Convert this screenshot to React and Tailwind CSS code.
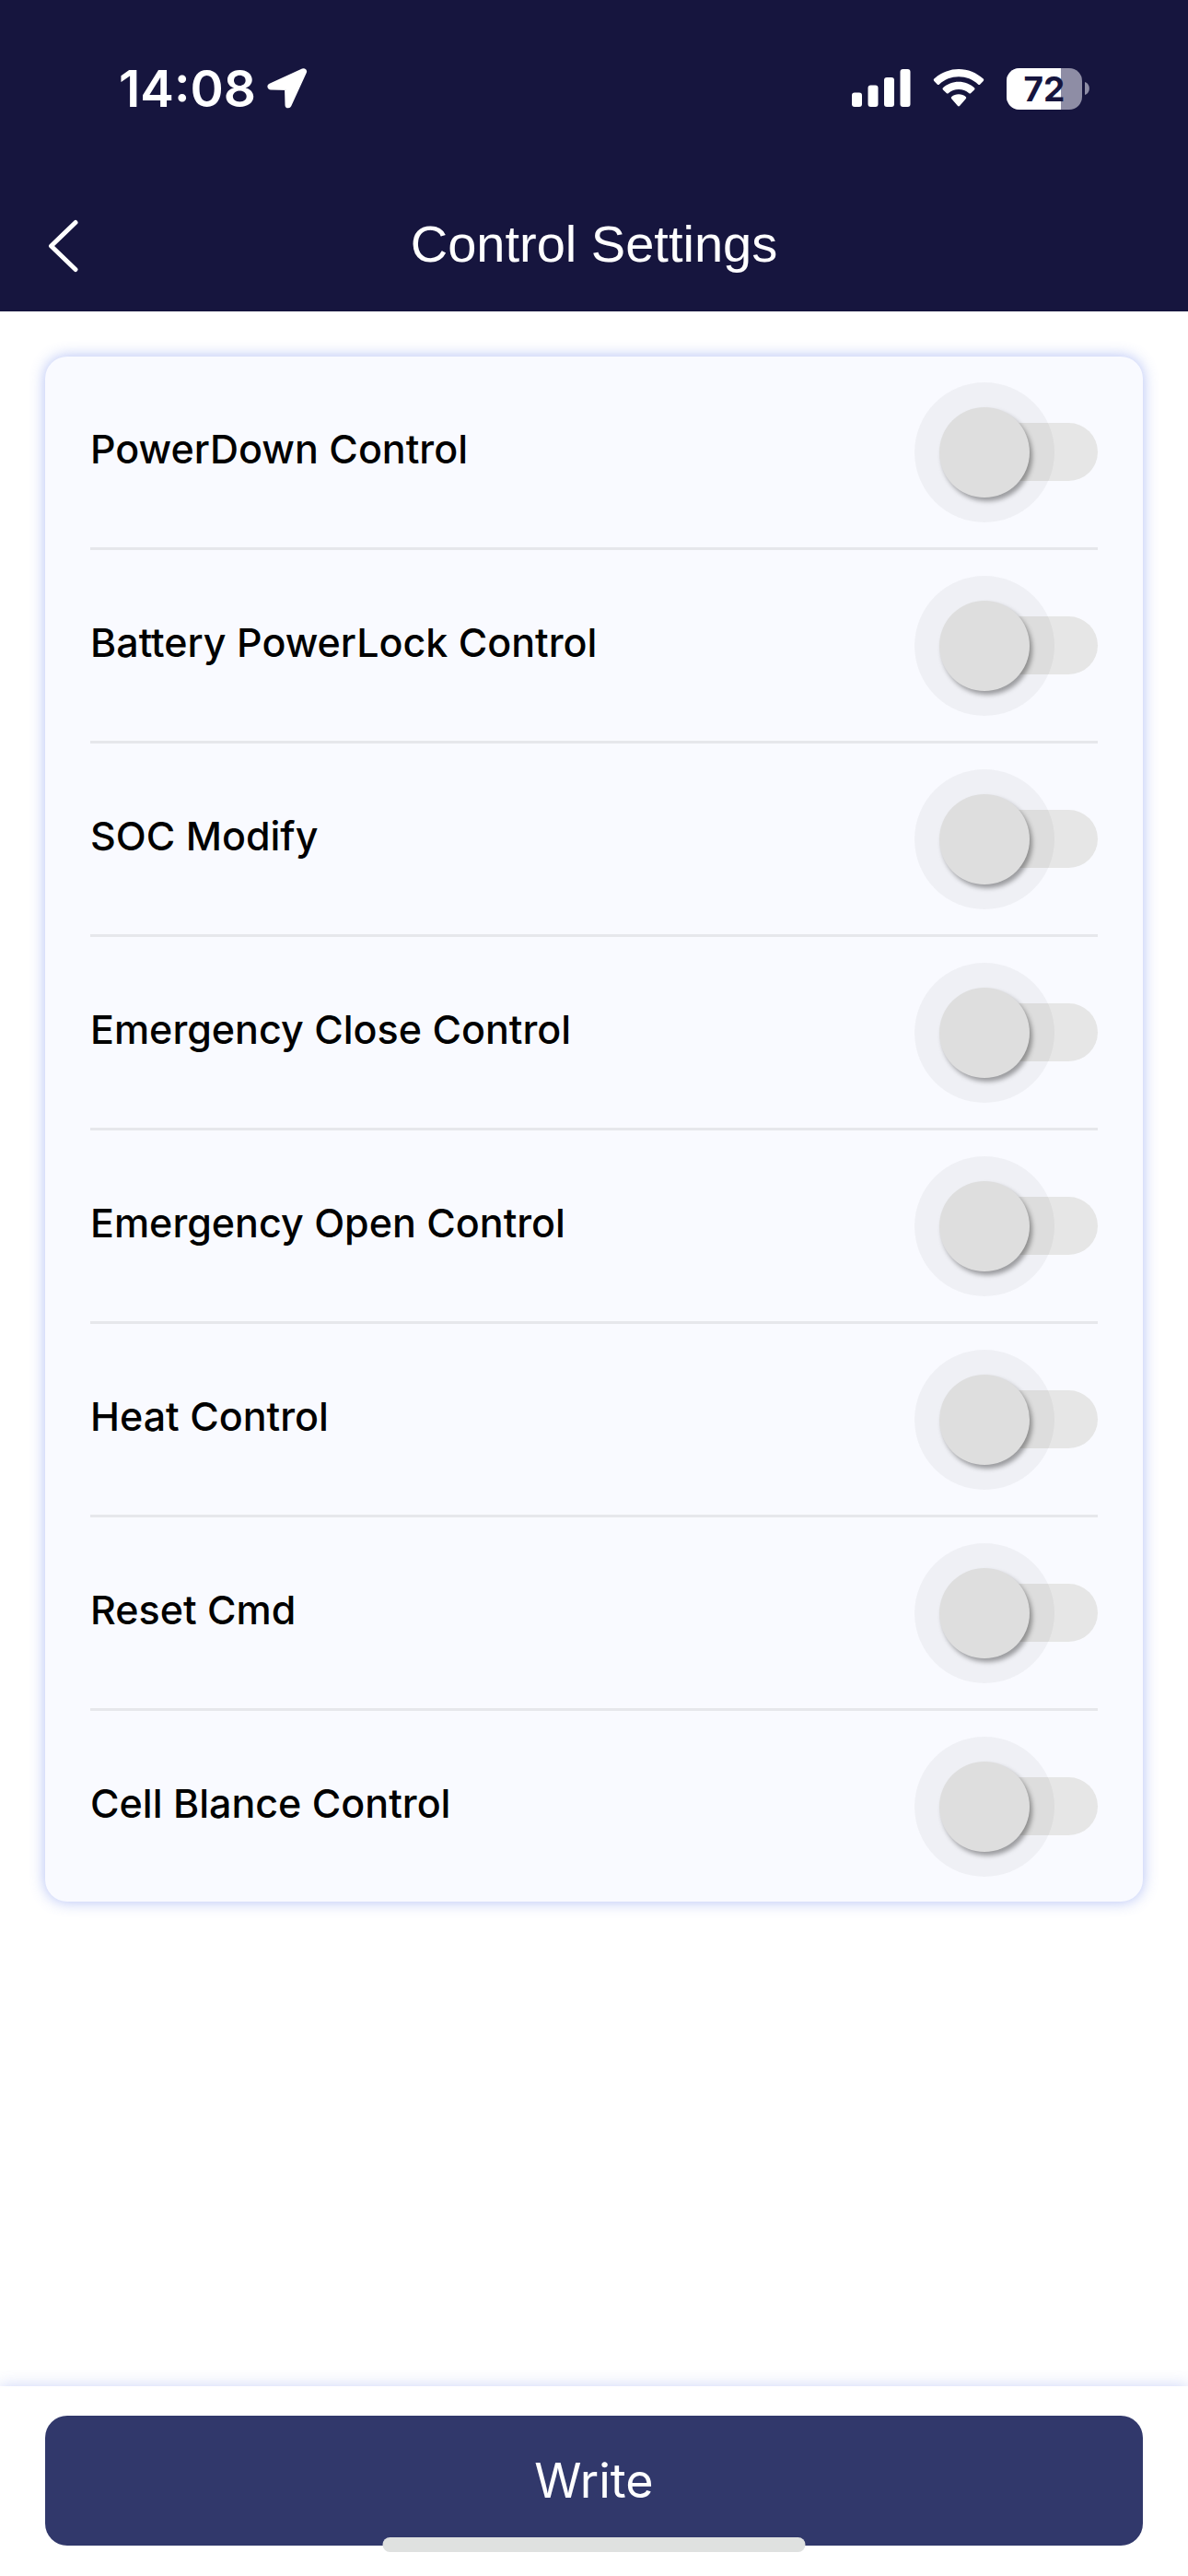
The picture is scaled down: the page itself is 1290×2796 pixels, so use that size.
import { useState } from 'react';

const CONTROLS = [
  { id: 'power-down', label: 'PowerDown Control' },
  { id: 'power-lock', label: 'Battery PowerLock Control' },
  { id: 'soc-modify', label: 'SOC Modify' },
  { id: 'emergency-close', label: 'Emergency Close Control' },
  { id: 'emergency-open', label: 'Emergency Open Control' },
  { id: 'heat', label: 'Heat Control' },
  { id: 'reset-cmd', label: 'Reset Cmd' },
  { id: 'cell-balance', label: 'Cell Blance Control' },
];

const LocationArrow = () => (
  <svg viewBox="0 0 44 44" className="h-11 w-11" aria-hidden="true">
    <path
      d="M39.500 3.800 L4 20 L22.500 20.500 L23 39.800 Z"
      fill="white"
      stroke="white"
      strokeWidth="7"
      strokeLinejoin="round"
    />
  </svg>
);

const SignalBars = () => (
  <svg viewBox="0 0 64 42" className="h-[42px] w-16" aria-hidden="true" fill="white">
    <rect x="0" y="25.500" width="11" height="15.500" rx="3" />
    <rect x="17.500" y="17.500" width="11" height="23.500" rx="3" />
    <rect x="35" y="9" width="11" height="32" rx="3" />
    <rect x="52.500" y="0" width="11" height="41" rx="3" />
  </svg>
);

const Wifi = () => (
  <svg viewBox="0 0 56 42" className="h-[42px] w-14" aria-hidden="true" fill="white">
    <path d="M28 0 C38 0 47.500 4 54.700 10.600 Q55.800 11.800 54.700 13 L51.300 16.400 Q50.200 17.400 49 16.400 C43.300 11.200 36 8.300 28 8.300 S12.700 11.200 7 16.400 Q5.800 17.400 4.700 16.400 L1.300 13 Q0.200 11.800 1.300 10.600 C8.500 4 18 0 28 0 Z" />
    <path d="M28 13.700 C34.500 13.700 40.400 16.100 45 20.200 Q46.200 21.300 45 22.500 L41.300 26.100 Q40.200 27.100 39 26.100 C36 23.500 32.200 22 28 22 S20 23.500 17 26.100 Q15.800 27.100 14.700 26.100 L11 22.500 Q9.800 21.300 11 20.200 C15.600 16.100 21.500 13.700 28 13.700 Z" />
    <path d="M28 27.300 C31 27.300 33.600 28.300 35.700 30 Q36.900 31.100 35.700 32.300 L29.200 39.800 Q28 41 26.800 39.800 L20.300 32.300 Q19.100 31.100 20.300 30 C22.400 28.300 25 27.300 28 27.300 Z" />
  </svg>
);

const Battery = ({ level }) => (
  <div className="flex items-center gap-[3px]">
    <div className="relative flex h-[45px] w-[82px] items-center justify-center overflow-hidden rounded-[14px] bg-[#8e8da5]">
      <div className="absolute inset-y-0 left-0 bg-white" style={{ width: `${level}%` }} />
      <span className="relative text-[37px] leading-none font-bold text-[#16153e]">{level}</span>
    </div>
    <svg viewBox="0 0 5 14" className="h-3.5 w-[5px]" aria-hidden="true">
      <path d="M0 0 C6.500 2 6.500 12 0 14 Z" fill="#8e8da5" />
    </svg>
  </div>
);

const StatusBar = () => (
  <div className="flex h-48 items-center justify-between pr-[107px] pl-[129px]">
    <div className="flex items-center gap-3">
      <span className="text-[55px] leading-none font-semibold">14:08</span>
      <LocationArrow />
    </div>
    <div className="flex items-center gap-6">
      <SignalBars />
      <Wifi />
      <Battery level={72} />
    </div>
  </div>
);

const TitleBar = () => (
  <div className="grid grid-cols-[1fr_auto_1fr] items-center pt-[22px] pb-[18px]">
    <button type="button" aria-label="Back" className="flex h-[106px] w-32 items-center pl-[52px]">
      <svg viewBox="0 0 34 58" className="h-[58px] w-[34px]" aria-hidden="true">
        <path d="M30 3.500 L3.500 29 L30 54.500" fill="none" stroke="white" strokeWidth="5" strokeLinecap="round" strokeLinejoin="round" />
      </svg>
    </button>
    <h1 className="pb-1 font-['Liberation_Sans',Arial,sans-serif] text-[56px] leading-[64px]">Control Settings</h1>
  </div>
);

const ControlRow = ({ id, label, checked, onChange }) => (
  <li className="flex h-[210px] items-center justify-between border-b-[3px] border-[#e6e7eb] last:h-[207px] last:border-b-0">
    <label htmlFor={id} className="flex-1 pb-2 text-[43px] leading-[56px] font-medium text-black">
      {label}
    </label>
    {/* Track is ::before, thumb with its halo is ::after */}
    <input
      id={id}
      type="checkbox"
      role="switch"
      checked={checked}
      onChange={onChange}
      className="relative h-[98px] w-[172px] shrink-0 cursor-pointer appearance-none before:absolute before:top-[17px] before:right-0 before:left-[27px] before:h-[63px] before:rounded-full before:bg-[#e6e6e6] after:absolute after:top-0 after:left-0 after:size-[98px] after:rounded-full after:bg-[#dedede] after:shadow-[3px_4px_5px_rgba(0,0,0,0.35),0_0_0_27px_rgba(0,0,0,0.04)] after:transition-transform checked:before:bg-[#a9aedb] checked:after:translate-x-[74px] checked:after:bg-[#31386b]"
    />
  </li>
);

const App = () => {
  const [values, setValues] = useState({});

  const toggle = (id) => setValues((prev) => ({ ...prev, [id]: !prev[id] }));

  return (
    <div className="flex min-h-screen flex-col bg-white font-['Inter',sans-serif]">
      <header className="bg-[#16153e] text-white">
        <StatusBar />
        <TitleBar />
      </header>

      <main className="flex-1 p-[49px]">
        <ul className="rounded-3xl bg-[#f9faff] px-[49px] shadow-[0_0_16px_rgba(80,110,230,0.45)]">
          {CONTROLS.map(({ id, label }) => (
            <ControlRow key={id} id={id} label={label} checked={!!values[id]} onChange={() => toggle(id)} />
          ))}
        </ul>
      </main>

      <footer className="relative bg-white px-[49px] pt-8 pb-[33px] shadow-[0_0_16px_rgba(80,110,230,0.3)]">
        <button type="button" className="h-[141px] w-full rounded-3xl bg-[#31386b] text-[52px] leading-none font-normal text-white">
          Write
        </button>
        {/* Home indicator */}
        <div className="absolute bottom-[26px] left-1/2 h-4 w-[459px] -translate-x-1/2 rounded-full bg-[#dfe1e0]" />
      </footer>
    </div>
  );
};

export default App;
